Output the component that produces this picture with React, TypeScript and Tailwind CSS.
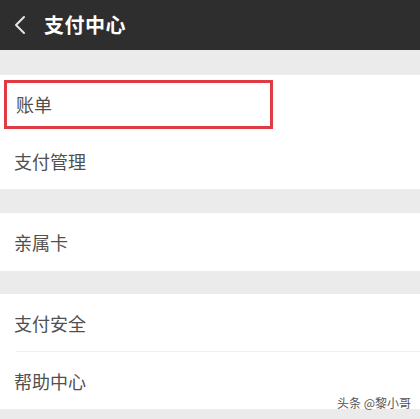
export default function App() {
  const font = { fontFamily: '"Noto Sans CJK SC", "Noto Sans", sans-serif' };

  return (
    <div className="w-[420px] h-[419px] bg-[#ebebeb] overflow-hidden relative" style={font}>
      {/* header */}
      <div className="h-[50px] bg-[#2e2e2e] flex items-center pl-[13px]">
        <svg width="14" height="20" viewBox="0 0 14 20" fill="none">
          <path d="M11 2 L3 10 L11 18" stroke="#e6e6e6" strokeWidth="2" strokeLinecap="round" strokeLinejoin="round" />
        </svg>
        <span className="ml-[17px] text-[20px] font-bold text-white leading-none tracking-[0.5px]">支付中心</span>
      </div>

      <div className="h-[25px]" />

      {/* group 1 */}
      <div className="bg-white">
        <div className="h-[58px] flex items-center pl-[4px]">
          <div className="w-[269px] h-[49px] border-[3px] border-[#e03b45] flex items-center pl-[9px]">
            <span className="text-[18px] text-[#505050] leading-none">账单</span>
          </div>
        </div>
        <div className="h-[56px] flex items-center pl-[14px]">
          <span className="text-[18px] text-[#505050] leading-none">支付管理</span>
        </div>
      </div>

      <div className="h-[24px]" />

      {/* group 2 */}
      <div className="bg-white">
        <div className="h-[58px] flex items-center pl-[14px]">
          <span className="text-[18px] text-[#505050] leading-none">亲属卡</span>
        </div>
      </div>

      <div className="h-[23px]" />

      {/* group 3 */}
      <div className="bg-white">
        <div className="h-[57px] flex items-center pl-[14px]">
          <span className="text-[18px] text-[#505050] leading-none">支付安全</span>
        </div>
        <div className="ml-[16px] h-px bg-[#f0f0f0]" />
        <div className="h-[57px] flex items-center pl-[14px]">
          <span className="text-[18px] text-[#505050] leading-none">帮助中心</span>
        </div>
      </div>

      <span className="absolute right-[9px] top-[397px] text-[12px] text-[#555] leading-none">头条 @黎小哥</span>
    </div>
  );
}
